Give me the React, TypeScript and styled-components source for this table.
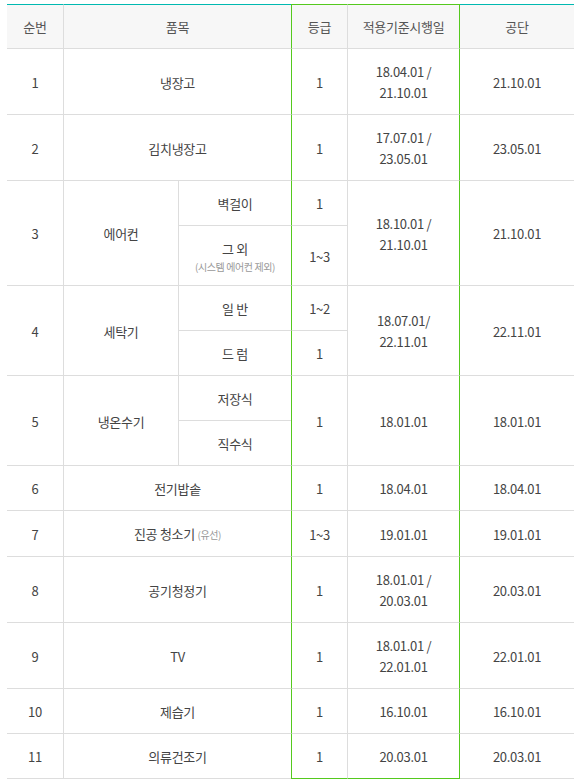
import React from "react";
import styled, { createGlobalStyle, css } from "styled-components";

const Global = createGlobalStyle`
  html, body { margin: 0; padding: 0; background: #fff; }
  body { font-family: "Noto Sans CJK KR", "Noto Sans", sans-serif; }
`;

const Wrap = styled.div`
  padding: 4px 7px;
`;

const Table = styled.table`
  width: 567px;
  table-layout: fixed;
  border-collapse: separate;
  border-spacing: 0;
  font-size: 13px;
  letter-spacing: -0.3px;
  color: #444;
`;

type CellProps = { $gl?: boolean; $gr?: boolean; $gb?: boolean; $first?: boolean; $noLeft?: boolean };

const cellBase = css<CellProps>`
  text-align: center;
  vertical-align: middle;
  line-height: 21px;
  border-bottom: 1px solid #dddddd;
  border-left: 1px solid ${(p) => (p.$gl ? "#55c91e" : "#dddddd")};
  ${(p) => (p.$first || p.$noLeft) && "border-left: none;"}
  ${(p) => p.$gr && "border-right: 1px solid #55c91e;"}
  ${(p) => p.$gb && "border-bottom: 1px solid #55c91e;"}
`;

const Th = styled.th<CellProps>`
  ${cellBase};
  padding: 11px 4px;
  font-weight: normal;
  color: #555;
  background: #f7f7f7;
  border-top: 1px solid ${(p) => (p.$gl || p.$gr ? "#55c91e" : "#00b9b1")};
`;

const Td = styled.td<CellProps>`
  ${cellBase};
  padding: 12px 4px 11px;
`;

const Note = styled.span<{ $block?: boolean }>`
  color: #999;
  font-size: 10px;
  letter-spacing: -0.4px;
  ${(p) => p.$block && "display: block; line-height: 15px;"}
`;

export default function App() {
  return (
    <Wrap>
      <Global />
      <Table>
        <colgroup>
          <col style={{ width: 56 }} />
          <col style={{ width: 115 }} />
          <col style={{ width: 113 }} />
          <col style={{ width: 56 }} />
          <col style={{ width: 113 }} />
          <col style={{ width: 114 }} />
        </colgroup>
        <thead>
          <tr>
            <Th $first>순번</Th>
            <Th colSpan={2}>품목</Th>
            <Th $gl>등급</Th>
            <Th $gr>적용기준시행일</Th>
            <Th $noLeft>공단</Th>
          </tr>
        </thead>
        <tbody>
          <tr>
            <Td $first>1</Td>
            <Td colSpan={2}>냉장고</Td>
            <Td $gl>1</Td>
            <Td $gr>18.04.01 /<br />21.10.01</Td>
            <Td $noLeft>21.10.01</Td>
          </tr>
          <tr>
            <Td $first>2</Td>
            <Td colSpan={2}>김치냉장고</Td>
            <Td $gl>1</Td>
            <Td $gr>17.07.01 /<br />23.05.01</Td>
            <Td $noLeft>23.05.01</Td>
          </tr>
          <tr>
            <Td $first rowSpan={2}>3</Td>
            <Td rowSpan={2}>에어컨</Td>
            <Td>벽걸이</Td>
            <Td $gl>1</Td>
            <Td $gr rowSpan={2}>18.10.01 /<br />21.10.01</Td>
            <Td $noLeft rowSpan={2}>21.10.01</Td>
          </tr>
          <tr>
            <Td>
              그 외
              <Note $block>(시스템 에어컨 제외)</Note>
            </Td>
            <Td $gl>1~3</Td>
          </tr>
          <tr>
            <Td $first rowSpan={2}>4</Td>
            <Td rowSpan={2}>세탁기</Td>
            <Td>일 반</Td>
            <Td $gl>1~2</Td>
            <Td $gr rowSpan={2}>18.07.01/<br />22.11.01</Td>
            <Td $noLeft rowSpan={2}>22.11.01</Td>
          </tr>
          <tr>
            <Td>드 럼</Td>
            <Td $gl>1</Td>
          </tr>
          <tr>
            <Td $first rowSpan={2}>5</Td>
            <Td rowSpan={2}>냉온수기</Td>
            <Td>저장식</Td>
            <Td $gl rowSpan={2}>1</Td>
            <Td $gr rowSpan={2}>18.01.01</Td>
            <Td $noLeft rowSpan={2}>18.01.01</Td>
          </tr>
          <tr>
            <Td>직수식</Td>
          </tr>
          <tr>
            <Td $first>6</Td>
            <Td colSpan={2}>전기밥솥</Td>
            <Td $gl>1</Td>
            <Td $gr>18.04.01</Td>
            <Td $noLeft>18.04.01</Td>
          </tr>
          <tr>
            <Td $first>7</Td>
            <Td colSpan={2}>
              진공 청소기 <Note>(유선)</Note>
            </Td>
            <Td $gl>1~3</Td>
            <Td $gr>19.01.01</Td>
            <Td $noLeft>19.01.01</Td>
          </tr>
          <tr>
            <Td $first>8</Td>
            <Td colSpan={2}>공기청정기</Td>
            <Td $gl>1</Td>
            <Td $gr>18.01.01 /<br />20.03.01</Td>
            <Td $noLeft>20.03.01</Td>
          </tr>
          <tr>
            <Td $first>9</Td>
            <Td colSpan={2}>TV</Td>
            <Td $gl>1</Td>
            <Td $gr>18.01.01 /<br />22.01.01</Td>
            <Td $noLeft>22.01.01</Td>
          </tr>
          <tr>
            <Td $first>10</Td>
            <Td colSpan={2}>제습기</Td>
            <Td $gl>1</Td>
            <Td $gr>16.10.01</Td>
            <Td $noLeft>16.10.01</Td>
          </tr>
          <tr>
            <Td $first>11</Td>
            <Td colSpan={2}>의류건조기</Td>
            <Td $gl $gb>1</Td>
            <Td $gr $gb>20.03.01</Td>
            <Td $noLeft>20.03.01</Td>
          </tr>
        </tbody>
      </Table>
    </Wrap>
  );
}
